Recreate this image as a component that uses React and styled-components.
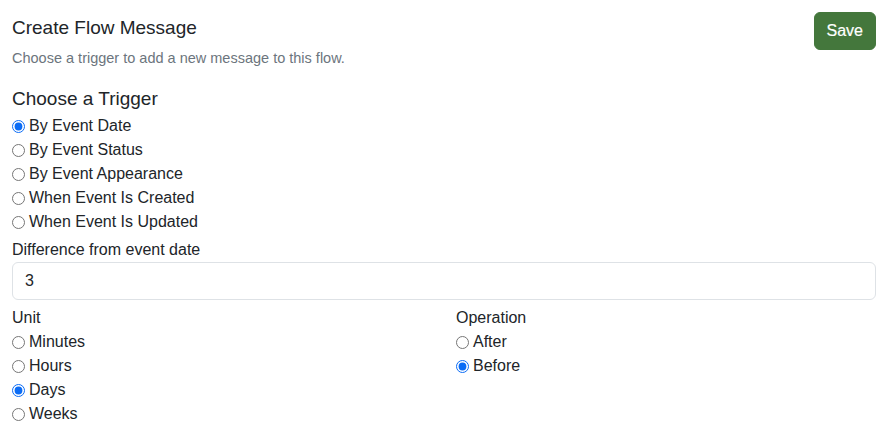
import React, { useState } from "react";
import styled, { createGlobalStyle } from "styled-components";

const Global = createGlobalStyle`
  html, body { margin: 0; padding: 0; background: #fff; }
  body { font-family: "Liberation Sans", Arial, sans-serif; color: #212529; }
  * { box-sizing: border-box; }
`;

const Page = styled.div`
  padding: 12px 14px 0 12px;
`;

const Header = styled.div`
  display: flex;
  justify-content: space-between;
  align-items: flex-start;
`;

const Titles = styled.div`
  display: flex;
  flex-direction: column;
`;

const Title = styled.h5`
  margin: 4px 0 0;
  font-size: 19px;
  font-weight: 400;
  line-height: 24px;
  color: #212529;
`;

const Subtitle = styled.p`
  margin: 8px 0 0;
  font-size: 14.5px;
  line-height: 21px;
  color: #6c757d;
`;

const SaveButton = styled.button`
  font-family: inherit;
  font-size: 16px;
  line-height: 24px;
  padding: 6px 12px 6px;
  color: #fff;
  background: #44773c;
  border: 1px solid #44773c;
  border-radius: 6px;
  cursor: pointer;
  -webkit-text-stroke: 0.2px #fff;
`;

const SectionTitle = styled.h5`
  margin: 18px 0 0;
  font-size: 19px;
  font-weight: 400;
  line-height: 24px;
`;

const RadioGroup = styled.div`
  display: flex;
  flex-direction: column;
  margin-top: ${(p) => p.$top || 0}px;
`;

const RadioRow = styled.label`
  display: flex;
  align-items: center;
  height: 24px;
  font-size: 16px;
  cursor: pointer;
`;

const Radio = styled.input.attrs({ type: "radio" })`
  width: 13px;
  height: 13px;
  margin: 0 4px 0 0;
  accent-color: #0b6cf5;
`;

const FieldLabel = styled.div`
  margin-top: ${(p) => p.$top ?? 4}px;
  font-size: 16px;
  line-height: 24px;
`;

const TextInput = styled.input`
  display: block;
  width: 100%;
  height: 38px;
  padding: 6px 12px;
  font-family: inherit;
  font-size: 16px;
  color: #212529;
  border: 1px solid #dee2e6;
  border-radius: 6px;
  outline: none;
`;

const Columns = styled.div`
  display: grid;
  grid-template-columns: 1fr 1fr;
  column-gap: 24px;
`;

const Column = styled.div`
  display: flex;
  flex-direction: column;
`;

const triggers = [
  "By Event Date",
  "By Event Status",
  "By Event Appearance",
  "When Event Is Created",
  "When Event Is Updated",
];
const units = ["Minutes", "Hours", "Days", "Weeks"];
const ops = ["After", "Before"];

export default function App() {
  const [trigger, setTrigger] = useState("By Event Date");
  const [unit, setUnit] = useState("Days");
  const [op, setOp] = useState("Before");
  const [diff, setDiff] = useState("3");

  return (
    <Page>
      <Global />
      <Header>
        <Titles>
          <Title>Create Flow Message</Title>
          <Subtitle>Choose a trigger to add a new message to this flow.</Subtitle>
        </Titles>
        <SaveButton>Save</SaveButton>
      </Header>

      <SectionTitle>Choose a Trigger</SectionTitle>
      <RadioGroup $top={3}>
        {triggers.map((t) => (
          <RadioRow key={t}>
            <Radio name="trigger" checked={trigger === t} onChange={() => setTrigger(t)} />
            {t}
          </RadioRow>
        ))}
      </RadioGroup>

      <FieldLabel $top={4}>Difference from event date</FieldLabel>
      <TextInput value={diff} onChange={(e) => setDiff(e.target.value)} />

      <Columns>
        <Column>
          <FieldLabel $top={6}>Unit</FieldLabel>
          <RadioGroup>
            {units.map((u) => (
              <RadioRow key={u}>
                <Radio name="unit" checked={unit === u} onChange={() => setUnit(u)} />
                {u}
              </RadioRow>
            ))}
          </RadioGroup>
        </Column>
        <Column>
          <FieldLabel $top={6}>Operation</FieldLabel>
          <RadioGroup>
            {ops.map((o) => (
              <RadioRow key={o}>
                <Radio name="op" checked={op === o} onChange={() => setOp(o)} />
                {o}
              </RadioRow>
            ))}
          </RadioGroup>
        </Column>
      </Columns>
    </Page>
  );
}
